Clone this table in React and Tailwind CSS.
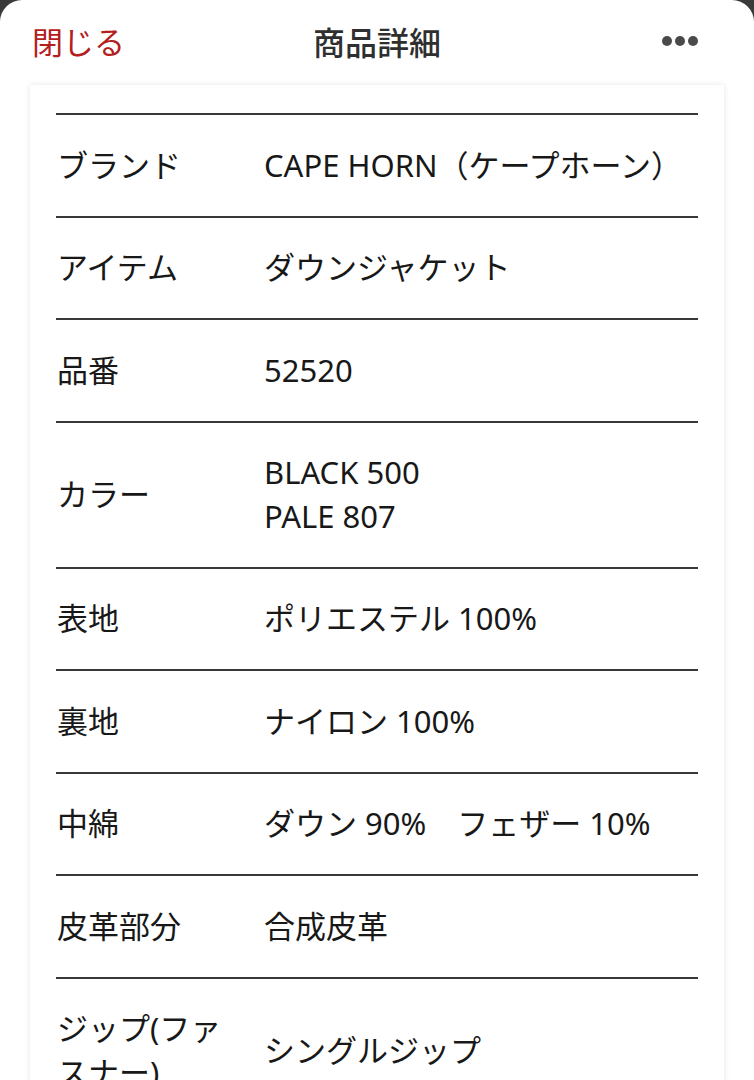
import React from "react";

const rows = [
  { label: "ブランド", value: ["CAPE HORN（ケープホーン）"] },
  { label: "アイテム", value: ["ダウンジャケット"] },
  { label: "品番", value: ["52520"] },
  { label: "カラー", value: ["BLACK 500", "PALE 807"] },
  { label: "表地", value: ["ポリエステル 100%"] },
  { label: "裏地", value: ["ナイロン 100%"] },
  { label: "中綿", value: ["ダウン 90%\u3000フェザー 10%"] },
  { label: "皮革部分", value: ["合成皮革"] },
  { label: "ジップ(ファスナー)", value: ["シングルジップ"] },
];

export default function App() {
  return (
    <div
      className="w-[754px] h-[1080px] overflow-hidden bg-[#3a3a3a]"
      style={{ fontFamily: '"Noto Sans", "Noto Sans CJK JP", sans-serif' }}
    >
      <div className="h-full bg-white rounded-t-[22px] flex flex-col">
        <header className="h-[85px] shrink-0 flex items-center justify-between pl-[32px] pr-[56px] relative">
          <span
            className="text-[31px] leading-none text-[#b3201e] -mt-[4px]"
            style={{ fontFamily: '"Noto Sans CJK JP", sans-serif' }}
          >
            閉じる
          </span>
          <span
            className="absolute left-0 right-0 text-center text-[32px] leading-none font-medium text-[#2f2f2f] -mt-[4px] pointer-events-none"
            style={{ fontFamily: '"Noto Sans CJK JP", sans-serif' }}
          >
            商品詳細
          </span>
          <span className="flex gap-[3px] items-center -mt-[4px]">
            <span className="w-[10px] h-[10px] rounded-full bg-[#4a4a4a]" />
            <span className="w-[10px] h-[10px] rounded-full bg-[#4a4a4a]" />
            <span className="w-[10px] h-[10px] rounded-full bg-[#4a4a4a]" />
          </span>
        </header>
        <div className="flex-1 px-[30px]">
          <div className="bg-white shadow-[0_0_6px_rgba(0,0,0,0.10)] px-[26px] pt-[28px] h-full">
            {rows.map((r) => (
              <div
                key={r.label}
                className="flex items-center border-t-2 border-[#383838] py-[28.5px] text-[31px] leading-[43.5px] text-[#181818]"
              >
                <div className="w-[208px] shrink-0 pl-[1px] pr-[30px]">{r.label}</div>
                <div className="flex-1">
                  {r.value.map((v) => (
                    <div key={v} className="whitespace-pre">{v}</div>
                  ))}
                </div>
              </div>
            ))}
          </div>
        </div>
      </div>
    </div>
  );
}
